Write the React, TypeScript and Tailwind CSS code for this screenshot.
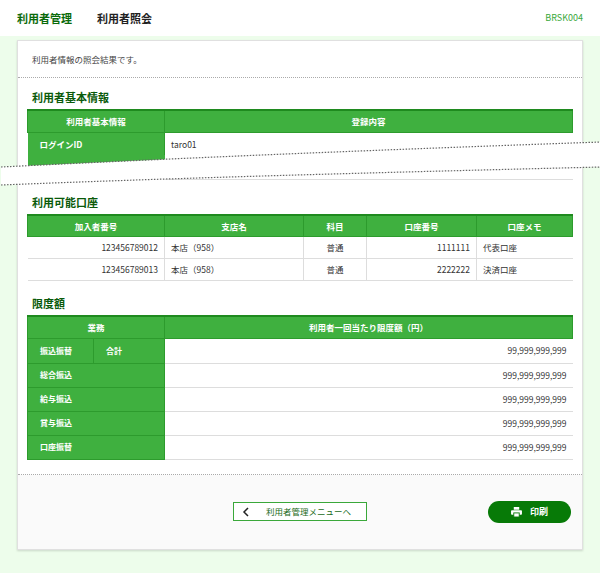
import React from 'react';

const font = { fontFamily: '"Noto Sans CJK JP", "Noto Sans", sans-serif' };

const th = 'border border-[#2d9b2d] bg-[#3fb03f] text-white text-[8.5px] leading-none font-bold text-center h-[22px]';
const td = 'border-b border-[#dddddd] text-[8.5px] leading-none text-[#333] h-[22px] px-1.5';

function SectionTitle({ children }: { children: React.ReactNode }) {
  return <h2 className="mb-[5px] text-[11px] leading-[14px] font-bold text-[#0a5a0a]">{children}</h2>;
}

export default function App() {
  return (
    <div className="w-[600px] h-[573px] bg-[#edfdeb]" style={font}>
      <header className="flex h-9 items-center bg-white px-[17px] text-[11px] font-bold">
        <span className="text-[#0a6a0a]">利用者管理</span>
        <span className="ml-[25px] text-[#222]">利用者照会</span>
        <span className="ml-auto text-[9px] font-normal text-[#3aa83a]">BRSK004</span>
      </header>
      <div className="mx-[17px] mt-1 border border-[#e0e0e0] bg-white shadow-[0_1px_2px_rgba(0,0,0,0.15)]">
        <p className="px-[14px] pt-[12px] pb-[12px] text-[8.5px] leading-[12px] text-[#444]">利用者情報の照会結果です。</p>
        <div className="border-t border-dotted border-[#aaa]" />
        <div className="px-[9px] pt-[12px] pb-[14px]">
          <div className="pl-[5px]"><SectionTitle>利用者基本情報</SectionTitle></div>
          <div className="relative">
            <table className="w-full border-collapse border-t-2 border-[#1f8a1f]">
              <tbody>
                <tr>
                  <td className={`${th} w-[137px]`}>利用者基本情報</td>
                  <td className={th}>登録内容</td>
                </tr>
                <tr>
                  <td className="bg-[#3fb03f] border-r border-[#2d9b2d] h-[23px] pl-3 text-[8.5px] leading-none font-bold text-white">ログインID</td>
                  <td className="px-1.5 text-[8.5px] leading-none text-[#333]">taro01</td>
                </tr>
                <tr>
                  <td className="bg-[#3fb03f] h-[24px]" />
                  <td className="border-b border-[#ddd]" />
                </tr>
              </tbody>
            </table>
            <svg className="absolute left-[-26px] top-[30px]" width="600" height="50" viewBox="0 0 600 50">
              <path d="M0 28 C200 18 400 10 600 3 L600 28 C400 33 200 38 0 46 Z" fill="#fff" />
              <path d="M0 28 C200 18 400 10 600 3" fill="none" stroke="#666" strokeWidth="1.2" strokeDasharray="1.5 1.5" />
              <path d="M0 46 C200 38 400 33 600 28" fill="none" stroke="#666" strokeWidth="1.2" strokeDasharray="1.5 1.5" />
            </svg>
          </div>

          <div className="mt-[15px] pl-[5px]"><SectionTitle>利用可能口座</SectionTitle></div>
          <table className="w-full border-collapse border-t-2 border-[#1f8a1f]">
            <tbody>
              <tr>
                <td className={`${th} w-[137px]`}>加入者番号</td>
                <td className={`${th} w-[139px]`}>支店名</td>
                <td className={`${th} w-[63px]`}>科目</td>
                <td className={`${th} w-[110px]`}>口座番号</td>
                <td className={th}>口座メモ</td>
              </tr>
              {[
                ['123456789012', '1111111', '代表口座'],
                ['123456789013', '2222222', '決済口座'],
              ].map(([n, a, m]) => (
                <tr key={n}>
                  <td className={`${td} text-right border-r`}>{n}</td>
                  <td className={`${td} border-r`}>本店（958）</td>
                  <td className={`${td} text-center border-r`}>普通</td>
                  <td className={`${td} text-right border-r`}>{a}</td>
                  <td className={td}>{m}</td>
                </tr>
              ))}
            </tbody>
          </table>

          <div className="mt-[15px] pl-[5px]"><SectionTitle>限度額</SectionTitle></div>
          <table className="w-full border-collapse border-t-2 border-[#1f8a1f]">
            <tbody>
              <tr>
                <td colSpan={2} className={`${th} w-[137px]`}>業務</td>
                <td className={th}>利用者一回当たり限度額（円）</td>
              </tr>
              <tr>
                <td className="w-[66px] border border-[#2d9b2d] bg-[#3fb03f] pl-3 text-[8px] leading-none font-bold text-white h-[25px]">振込振替</td>
                <td className="w-[71px] border border-[#2d9b2d] bg-[#3fb03f] pl-3 text-[8px] leading-none font-bold text-white">合計</td>
                <td className={`${td} text-right h-[25px]`}>99,999,999,999</td>
              </tr>
              {['総合振込', '給与振込', '賞与振込', '口座振替'].map((k) => (
                <tr key={k}>
                  <td colSpan={2} className="border border-[#2d9b2d] bg-[#3fb03f] pl-3 text-[8px] leading-none font-bold text-white h-[24px]">{k}</td>
                  <td className={`${td} text-right h-[24px]`}>999,999,999,999</td>
                </tr>
              ))}
            </tbody>
          </table>
        </div>
        <div className="border-t border-dotted border-[#aaa]" />
        <div className="relative flex h-[74px] items-center justify-center bg-[#fafafa]">
          <button className="flex h-[19px] w-[134px] items-center border border-[#3aa83a] bg-white pl-2 text-[8.5px] text-[#1a6a1a]">
            <svg width="8" height="10" viewBox="0 0 8 10" className="mr-4"><path d="M6 1 L2 5 L6 9" fill="none" stroke="#222" strokeWidth="1.5" /></svg>
            利用者管理メニューへ
          </button>
          <button className="absolute right-[11px] flex h-[22px] w-[83px] items-center justify-center gap-2 rounded-full bg-[#077a07] text-[9px] font-bold text-white">
            <svg width="11" height="10" viewBox="0 0 12 11" fill="#fff"><rect x="3" y="0" width="6" height="3" /><rect x="0" y="3.5" width="12" height="5" rx="1" /><rect x="3" y="6.5" width="6" height="4.5" fill="#fff" stroke="#077a07" strokeWidth="1" /></svg>
            印刷
          </button>
        </div>
      </div>
    </div>
  );
}
